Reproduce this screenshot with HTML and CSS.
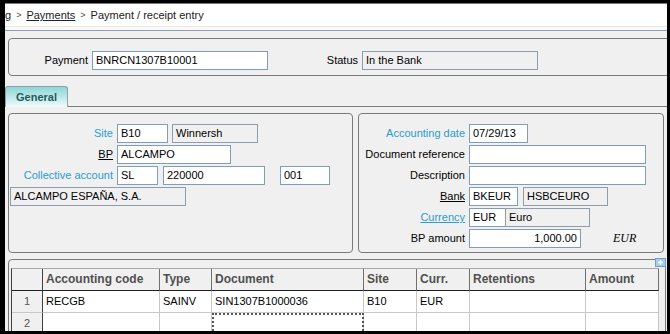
FILE: index.html
```html
<!DOCTYPE html>
<html lang="en">

<head>
  <meta charset="UTF-8">
  <title>Payment / receipt entry</title>
  <link rel="stylesheet" href="styles.css">
</head>

<body>
  <div class="screen">
    <div class="crumbs">
      <a class="link">g</a><span class="sep">&gt;</span><a class="link">Payments</a><span class="sep">&gt;</span><span>Payment / receipt entry</span>
    </div>
    <div class="strip"></div>

    <div class="content">
      <div class="head-box">
        <label class="lbl pay-lbl">Payment</label>
        <div class="fld w176">BNRCN1307B10001</div>
        <label class="lbl status-lbl">Status</label>
        <div class="fld ro w176">In the Bank</div>
      </div>

      <div class="tabs">
        <div class="tab">General</div>
      </div>

      <div class="panels">
        <div class="panel left">
          <div class="row">
            <label class="lbl col-l key">Site</label>
            <div class="fld w51">B10</div>
            <div class="fld ro w86 ml4">Winnersh</div>
          </div>
          <div class="row">
            <label class="lbl col-l"><u>BP</u></label>
            <div class="fld w114">ALCAMPO</div>
          </div>
          <div class="row">
            <label class="lbl col-l key">Collective account</label>
            <div class="fld w41">SL</div>
            <div class="fld w102 ml5">220000</div>
            <div class="fld w50 ml15">001</div>
          </div>
          <div class="row">
            <div class="fld ro w176 ml1">ALCAMPO ESPAÑA, S.A.</div>
          </div>
        </div>

        <div class="panel right">
          <div class="row">
            <label class="lbl col-r key">Accounting date</label>
            <div class="fld w59">07/29/13</div>
          </div>
          <div class="row">
            <label class="lbl col-r">Document reference</label>
            <div class="fld w177"></div>
          </div>
          <div class="row">
            <label class="lbl col-r">Description</label>
            <div class="fld w177"></div>
          </div>
          <div class="row">
            <label class="lbl col-r"><u>Bank</u></label>
            <div class="fld w49">BKEUR</div>
            <div class="fld ro w85 ml5">HSBCEURO</div>
          </div>
          <div class="row">
            <label class="lbl col-r key"><u>Currency</u></label>
            <div class="fld w37">EUR</div>
            <div class="fld ro w85 join">Euro</div>
          </div>
          <div class="row">
            <label class="lbl col-r">BP amount</label>
            <div class="fld w112 num">1,000.00</div>
            <span class="unit">EUR</span>
          </div>
        </div>
      </div>

      <div class="grid-box">
        <span class="grid-plus">
          <svg width="11" height="9" viewBox="0 0 11 9">
            <rect x="0.5" y="0.5" width="10" height="8" fill="#a9cdec" stroke="#6d9fd0"/>
            <path d="M5.5 2v5M3 4.5h5" stroke="#fff" stroke-width="1.4"/>
          </svg>
        </span>
        <div class="grid">
          <div class="hd num-col"></div>
          <div class="hd">Accounting code</div>
          <div class="hd">Type</div>
          <div class="hd">Document</div>
          <div class="hd">Site</div>
          <div class="hd">Curr.</div>
          <div class="hd">Retentions</div>
          <div class="hd">Amount</div>

          <div class="cell num-col">1</div>
          <div class="cell">RECGB</div>
          <div class="cell">SAINV</div>
          <div class="cell">SIN1307B1000036</div>
          <div class="cell">B10</div>
          <div class="cell">EUR</div>
          <div class="cell"></div>
          <div class="cell"></div>

          <div class="cell num-col">2</div>
          <div class="cell"></div>
          <div class="cell"></div>
          <div class="cell focus"></div>
          <div class="cell"></div>
          <div class="cell"></div>
          <div class="cell"></div>
          <div class="cell"></div>
        </div>
      </div>
    </div>
  </div>
</body>

</html>
```

FILE: styles.css
```css
body {
  margin: 0;
  background: #000;
  font-family: 'Liberation Sans', Arial, sans-serif;
  font-size: 11px;
  color: #000;
}

.screen {
  width: 662px;
  height: 328px;
  margin: 3px 0 0 5px;
  overflow: hidden;
  background: #f0f0f0;
}

/* breadcrumb */
.crumbs {
  height: 22px;
  background: #fff;
  border-top: 1px solid #7a7a7a;
  border-bottom: 1px solid #efe7da;
  display: flex;
  align-items: center;
  font-size: 11px;
  color: #222;
}

.crumbs .link {
  text-decoration: underline;
}

.crumbs .sep {
  margin: 0 5px;
  font-size: 9px;
  color: #444;
}

.strip {
  height: 3px;
  background: #f8fafb;
  border-bottom: 1px solid #8d9fb2;
}

.content {
  padding-top: 7px;
  position: relative;
}

/* header box */
.head-box {
  width: 680px;
  height: 38px;
  box-sizing: border-box;
  margin-left: 3px;
  border: 1px solid #7a7a7a;
  border-radius: 4px;
  display: flex;
  align-items: flex-start;
  padding-top: 12px;
}

.lbl {
  text-align: right;
  white-space: nowrap;
  line-height: 19px;
  margin-right: 4px;
}

.pay-lbl {
  width: 79px;
}

.status-lbl {
  width: 90px;
}

.key {
  color: #2b9ccd;
}

/* fields */
.fld {
  height: 19px;
  box-sizing: border-box;
  border: 1px solid #7f9db9;
  background: #fff;
  padding: 0 3px;
  line-height: 17px;
  white-space: nowrap;
  overflow: hidden;
  flex: none;
}

.fld.ro {
  background: #f0f0f0;
  border-color: #8e9cab;
}

.fld.num {
  text-align: right;
}

.fld.join {
  margin-left: -1px;
}

.w37 { width: 37px; }
.w41 { width: 41px; }
.w49 { width: 49px; }
.w50 { width: 50px; }
.w51 { width: 51px; }
.w59 { width: 59px; }
.w85 { width: 85px; }
.w86 { width: 86px; }
.w102 { width: 102px; }
.w112 { width: 112px; }
.w114 { width: 114px; }
.w176 { width: 176px; }
.w177 { width: 177px; }

.ml1 { margin-left: 1px; }
.ml4 { margin-left: 4px; }
.ml5 { margin-left: 5px; }
.ml15 { margin-left: 15px; }

/* tabs */
.tabs {
  margin-top: 10px;
  height: 20px;
  border-bottom: 1px solid #7a7a7a;
  display: flex;
}

.tab {
  width: 63px;
  height: 21px;
  box-sizing: border-box;
  border: 1px solid #8aa3a8;
  border-bottom: none;
  border-radius: 3px 3px 0 0;
  background: linear-gradient(#8fd6d6, #b9e6e6 45%, #f2fbfb);
  color: #1f5c5e;
  font-weight: bold;
  text-align: center;
  line-height: 20px;
  position: relative;
  z-index: 1;
}

/* panels */
.panels {
  display: flex;
  gap: 5px;
  margin: 6px 0 0 3px;
}

.panel {
  height: 140px;
  box-sizing: border-box;
  border: 1px solid #7a7a7a;
  border-radius: 4px;
  padding-top: 10px;
  display: flex;
  flex-direction: column;
  gap: 2px;
}

.panel.left {
  width: 345px;
}

.panel.right {
  width: 306px;
}

.row {
  display: flex;
  align-items: center;
  height: 19px;
}

.col-l {
  width: 104px;
}

.col-r {
  width: 106px;
}

.unit {
  margin-left: 32px;
  font-family: 'Liberation Serif', 'Times New Roman', serif;
  font-style: italic;
  font-size: 12px;
}

/* lines grid */
.grid-box {
  width: 658px;
  height: 80px;
  box-sizing: border-box;
  margin: 6px 0 0 3px;
  border: 1px solid #7a7a7a;
  border-radius: 4px;
  padding: 8px 0 0 2px;
  position: relative;
}

.grid-plus {
  position: absolute;
  top: -2px;
  right: -1px;
  line-height: 0;
}

.grid {
  display: grid;
  grid-template-columns: 31px 117px 52px 152px 53px 53px 116px 73px;
  width: 647px;
  border-left: 1px solid #404040;
  border-top: 1px solid #a8a8a8;
  background: #fff;
}

.hd,
.cell {
  height: 22px;
  box-sizing: border-box;
  padding-left: 3px;
  line-height: 21px;
  white-space: nowrap;
  overflow: hidden;
}

.hd {
  background: #f0f0f0;
  border-right: 1px solid #707070;
  border-bottom: 1px solid #202020;
  font-size: 12px;
  font-weight: bold;
  color: #505050;
}

.cell {
  border-right: 1px solid #c8c8c8;
  border-bottom: 1px solid #c8c8c8;
}

.num-col {
  background: #f0f0f0;
  border-right: 1px solid #404040;
  text-align: center;
  padding-left: 0;
  color: #555;
}

.cell.focus {
  outline: 2px dotted #555;
  outline-offset: -2px;
}
```
